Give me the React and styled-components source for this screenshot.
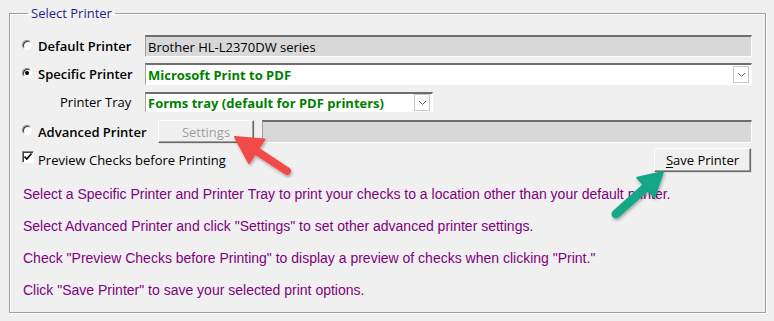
import styled, { createGlobalStyle } from "styled-components";

const Global = createGlobalStyle`
  html, body { margin: 0; padding: 0; background: #f0f0f0; }
  body { width: 774px; height: 321px; overflow: hidden; position: relative; }
`;

const Page = styled.div`
  position: relative;
  width: 774px;
  height: 321px;
  font-family: "Open Sans", "Liberation Sans", sans-serif;
  font-size: 13px;
  color: #000;
`;

const Group = styled.fieldset`
  box-sizing: border-box;
  margin: 4px 0 0 9px;
  width: 757px;
  padding: 0 13px 6px 12px;
  border: 1px solid #a0a0a0;
  box-shadow: 1px 1px 0 #fff, inset 1px 1px 0 #fff;
  min-width: 0;
`;

const Legend = styled.legend`
  margin-left: 6px;
  padding: 0 3px;
  line-height: 18px;
  color: #1e1e8c;
  font-size: 13px;
`;

const Row = styled.div`
  display: flex;
  align-items: center;
  height: ${(p) => p.h}px;
  margin-top: ${(p) => p.top}px;
`;

const LabelCell = styled.div`
  display: flex;
  align-items: center;
  gap: ${(p) => p.gap || 6}px;
  width: ${(p) => p.w || 123}px;
  flex: none;
  padding-left: ${(p) => p.indent || 0}px;
  box-sizing: border-box;
`;

const Radio = styled.span`
  position: relative;
  width: 10px;
  height: 10px;
  border-radius: 50%;
  background: #fff;
  box-sizing: border-box;
  border: 1px solid;
  border-color: #8a8a8a #fff #fff #8a8a8a;
  box-shadow: inset 1px 1px 0 #3c3c3c;
  margin-top: -3px;
  &::after {
    content: "";
    display: ${(p) => (p.checked ? "block" : "none")};
    position: absolute;
    left: 2px;
    top: 2px;
    width: 4px;
    height: 4px;
    border-radius: 50%;
    background: #000;
  }
`;

const Check = styled.span`
  display: flex;
  width: 12px;
  height: 12px;
  box-sizing: border-box;
  background: #fff;
  border: 1px solid;
  border-color: #8a8a8a #fff #fff #8a8a8a;
  box-shadow: inset 1px 1px 0 #3c3c3c;
  margin-top: -6px;
`;

const Label = styled.span`
  font-weight: ${(p) => (p.bold ? 600 : 400)};
  white-space: nowrap;
  color: ${(p) => p.color || "#000"};
`;

const Field = styled.div`
  position: relative;
  display: flex;
  align-items: center;
  box-sizing: border-box;
  height: ${(p) => p.h || 22}px;
  width: ${(p) => (p.w ? `${p.w}px` : "auto")};
  flex: ${(p) => (p.w ? "none" : "1")};
  margin-left: ${(p) => p.ml || 0}px;
  background: ${(p) => (p.grey ? "#d8d8d8" : "#fff")};
  border-top: 2px solid #6e6e6e;
  border-left: 1px solid #a0a0a0;
  border-right: 1px solid #fff;
  border-bottom: 1px solid #fff;
  padding-left: 2px;
  color: ${(p) => (p.green ? "#008000" : "#000")};
  font-weight: ${(p) => (p.green ? 700 : 400)};
  white-space: nowrap;
`;

const FieldText = styled.span`
  flex: 1;
  overflow: hidden;
`;

const DropBtn = styled.span`
  display: flex;
  align-items: center;
  justify-content: center;
  width: 16px;
  height: 17px;
  box-sizing: border-box;
  margin-right: 2px;
  border: 1px solid #c8c8c8;
  background: #fff;
`;

const Button = styled.button`
  box-sizing: border-box;
  width: ${(p) => p.w}px;
  height: ${(p) => p.h}px;
  margin-left: ${(p) => p.ml || 0};
  margin-right: ${(p) => p.mr || 0}px;
  background: #f0f0f0;
  border: 1px solid;
  border-color: #fff #696969 #696969 #fff;
  box-shadow: inset -1px -1px 0 #a0a0a0, 1px 1px 0 #e0e0e0;
  font-family: "Open Sans", "Liberation Sans", sans-serif;
  font-size: 13px;
  color: ${(p) => (p.disabled ? "#a0a0a0" : "#000")};
  padding: 0;
  u { text-decoration: underline; text-underline-offset: 2px; }
`;

const Help = styled.div`
  margin-top: 6px;
  padding-left: 1px;
  font-family: "Liberation Sans", sans-serif;
  font-size: 14px;
  color: #800080;
  p {
    margin: 0;
    line-height: 32px;
    white-space: nowrap;
  }
`;

const Overlay = styled.svg`
  position: absolute;
  left: 0;
  top: 0;
  pointer-events: none;
`;

const Chevron = () => (
  <svg width="9" height="6" viewBox="0 0 9 6">
    <polyline points="1,1 4.5,4.5 8,1" fill="none" stroke="#606060" strokeWidth="1" />
  </svg>
);

const Arrow = ({ tail, tip, color, width, headLen, headHalf }) => {
  const dx = tip[0] - tail[0];
  const dy = tip[1] - tail[1];
  const len = Math.hypot(dx, dy);
  const ux = dx / len;
  const uy = dy / len;
  const px = -uy;
  const py = ux;
  const bx = tip[0] - ux * headLen;
  const by = tip[1] - uy * headLen;
  const head = [
    [tip[0], tip[1]],
    [bx + px * headHalf, by + py * headHalf],
    [bx - px * headHalf, by - py * headHalf],
  ]
    .map((p) => p.join(","))
    .join(" ");
  return (
    <g filter="url(#shadow)">
      <line
        x1={tail[0]}
        y1={tail[1]}
        x2={bx + ux * 2}
        y2={by + uy * 2}
        stroke={color}
        strokeWidth={width}
        strokeLinecap="round"
      />
      <polygon points={head} fill={color} strokeLinejoin="round" stroke={color} strokeWidth="2" />
    </g>
  );
};

export default function App() {
  return (
    <Page>
      <Global />
      <Group>
        <Legend>Select Printer</Legend>

        <Row h={22} top={13}>
          <LabelCell>
            <Radio />
            <Label bold>Default Printer</Label>
          </LabelCell>
          <Field grey>
            <FieldText>Brother HL-L2370DW series</FieldText>
          </Field>
        </Row>

        <Row h={22} top={6}>
          <LabelCell>
            <Radio checked />
            <Label bold>Specific Printer</Label>
          </LabelCell>
          <Field green>
            <FieldText>Microsoft Print to PDF</FieldText>
            <DropBtn>
              <Chevron />
            </DropBtn>
          </Field>
        </Row>

        <Row h={20} top={7}>
          <LabelCell indent={38}>
            <Label>Printer Tray</Label>
          </LabelCell>
          <Field green w={288} h={20}>
            <FieldText>Forms tray (default for PDF printers)</FieldText>
            <DropBtn>
              <Chevron />
            </DropBtn>
          </Field>
        </Row>

        <Row h={23} top={8}>
          <LabelCell w={136}>
            <Radio />
            <Label bold>Advanced Printer</Label>
          </LabelCell>
          <Button w={96} h={23} disabled>
            Settings
          </Button>
          <Field grey ml={8} h={23} />
        </Row>

        <Row h={24} top={5}>
          <LabelCell w={300} gap={4}>
            <Check>
              <svg width="10" height="10" viewBox="0 0 10 10">
                <polyline points="1.5,4.5 3.8,7 8.5,1.5" fill="none" stroke="#000" strokeWidth="1.6" />
              </svg>
            </Check>
            <Label>Preview Checks before Printing</Label>
          </LabelCell>
          <Button w={97} h={24} ml="auto" mr={1}>
            <u>S</u>ave Printer
          </Button>
        </Row>

        <Help>
          <p>Select a Specific Printer and Printer Tray to print your checks to a location other than your default printer.</p>
          <p>Select Advanced Printer and click "Settings" to set other advanced printer settings.</p>
          <p>Check "Preview Checks before Printing" to display a preview of checks when clicking "Print."</p>
          <p>Click "Save Printer" to save your selected print options.</p>
        </Help>
      </Group>

      <Overlay width="774" height="321">
        <defs>
          <filter id="shadow" x="-20%" y="-20%" width="140%" height="140%">
            <feDropShadow dx="1" dy="2" stdDeviation="1.5" floodColor="#000" floodOpacity="0.3" />
          </filter>
        </defs>
        <Arrow tail={[287, 167]} tip={[235, 133]} color="#f24a4a" width={8} headLen={26} headHalf={14} />
        <Arrow tail={[616, 210]} tip={[663, 168]} color="#12a886" width={9} headLen={23} headHalf={13} />
      </Overlay>
    </Page>
  );
}
